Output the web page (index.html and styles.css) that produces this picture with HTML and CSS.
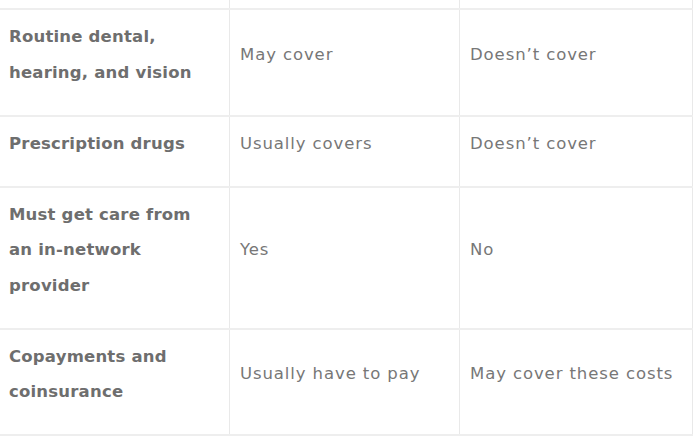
FILE: index.html
```html
<!DOCTYPE html>
<html lang="en">
<head>
<meta charset="utf-8">
<title>Coverage comparison</title>
<link rel="stylesheet" href="styles.css">
</head>
<body>
<table class="compare">
  <colgroup>
    <col class="c1"><col class="c2"><col class="c3">
  </colgroup>
  <tbody>
    <tr class="cut"><td></td><td></td><td></td></tr>
    <tr>
      <td class="label">Routine dental, hearing, and vision</td>
      <td>May cover</td>
      <td>Doesn’t cover</td>
    </tr>
    <tr>
      <td class="label">Prescription drugs</td>
      <td>Usually covers</td>
      <td>Doesn’t cover</td>
    </tr>
    <tr>
      <td class="label">Must get care from an in-network provider</td>
      <td>Yes</td>
      <td>No</td>
    </tr>
    <tr>
      <td class="label">Copayments and coinsurance</td>
      <td>Usually have to pay</td>
      <td>May cover these costs</td>
    </tr>
  </tbody>
</table>
</body>
</html>
```

FILE: styles.css
```css
html, body {
  margin: 0;
  padding: 0;
  background: #ffffff;
}

body {
  overflow: hidden;
}

.compare {
  border-collapse: collapse;
  table-layout: fixed;
  width: 693px;
  margin-left: -1px;
  font-family: "DejaVu Sans", "Open Sans", sans-serif;
  font-size: 16.5px;
  line-height: 35.5px;
  letter-spacing: 0.9px;
  color: #777777;
}

.c1 { width: 230px; }
.c2 { width: 230px; }
.c3 { width: 233px; }

.compare td {
  border-left: 1px solid #e9e9e9;
  border-right: 1px solid #e9e9e9;
  border-bottom: 2px solid #eeeeee;
  padding: 9px 10px 24.5px 10px;
  vertical-align: middle;
  text-align: left;
}

.compare td:first-child {
  padding-left: 9px;
  padding-right: 25px;
}

.compare .cut td {
  height: 8px;
  padding: 0;
  line-height: 0;
}

.compare .label {
  font-weight: 700;
  letter-spacing: 0.2px;
  color: #6e6e6e;
}
```
